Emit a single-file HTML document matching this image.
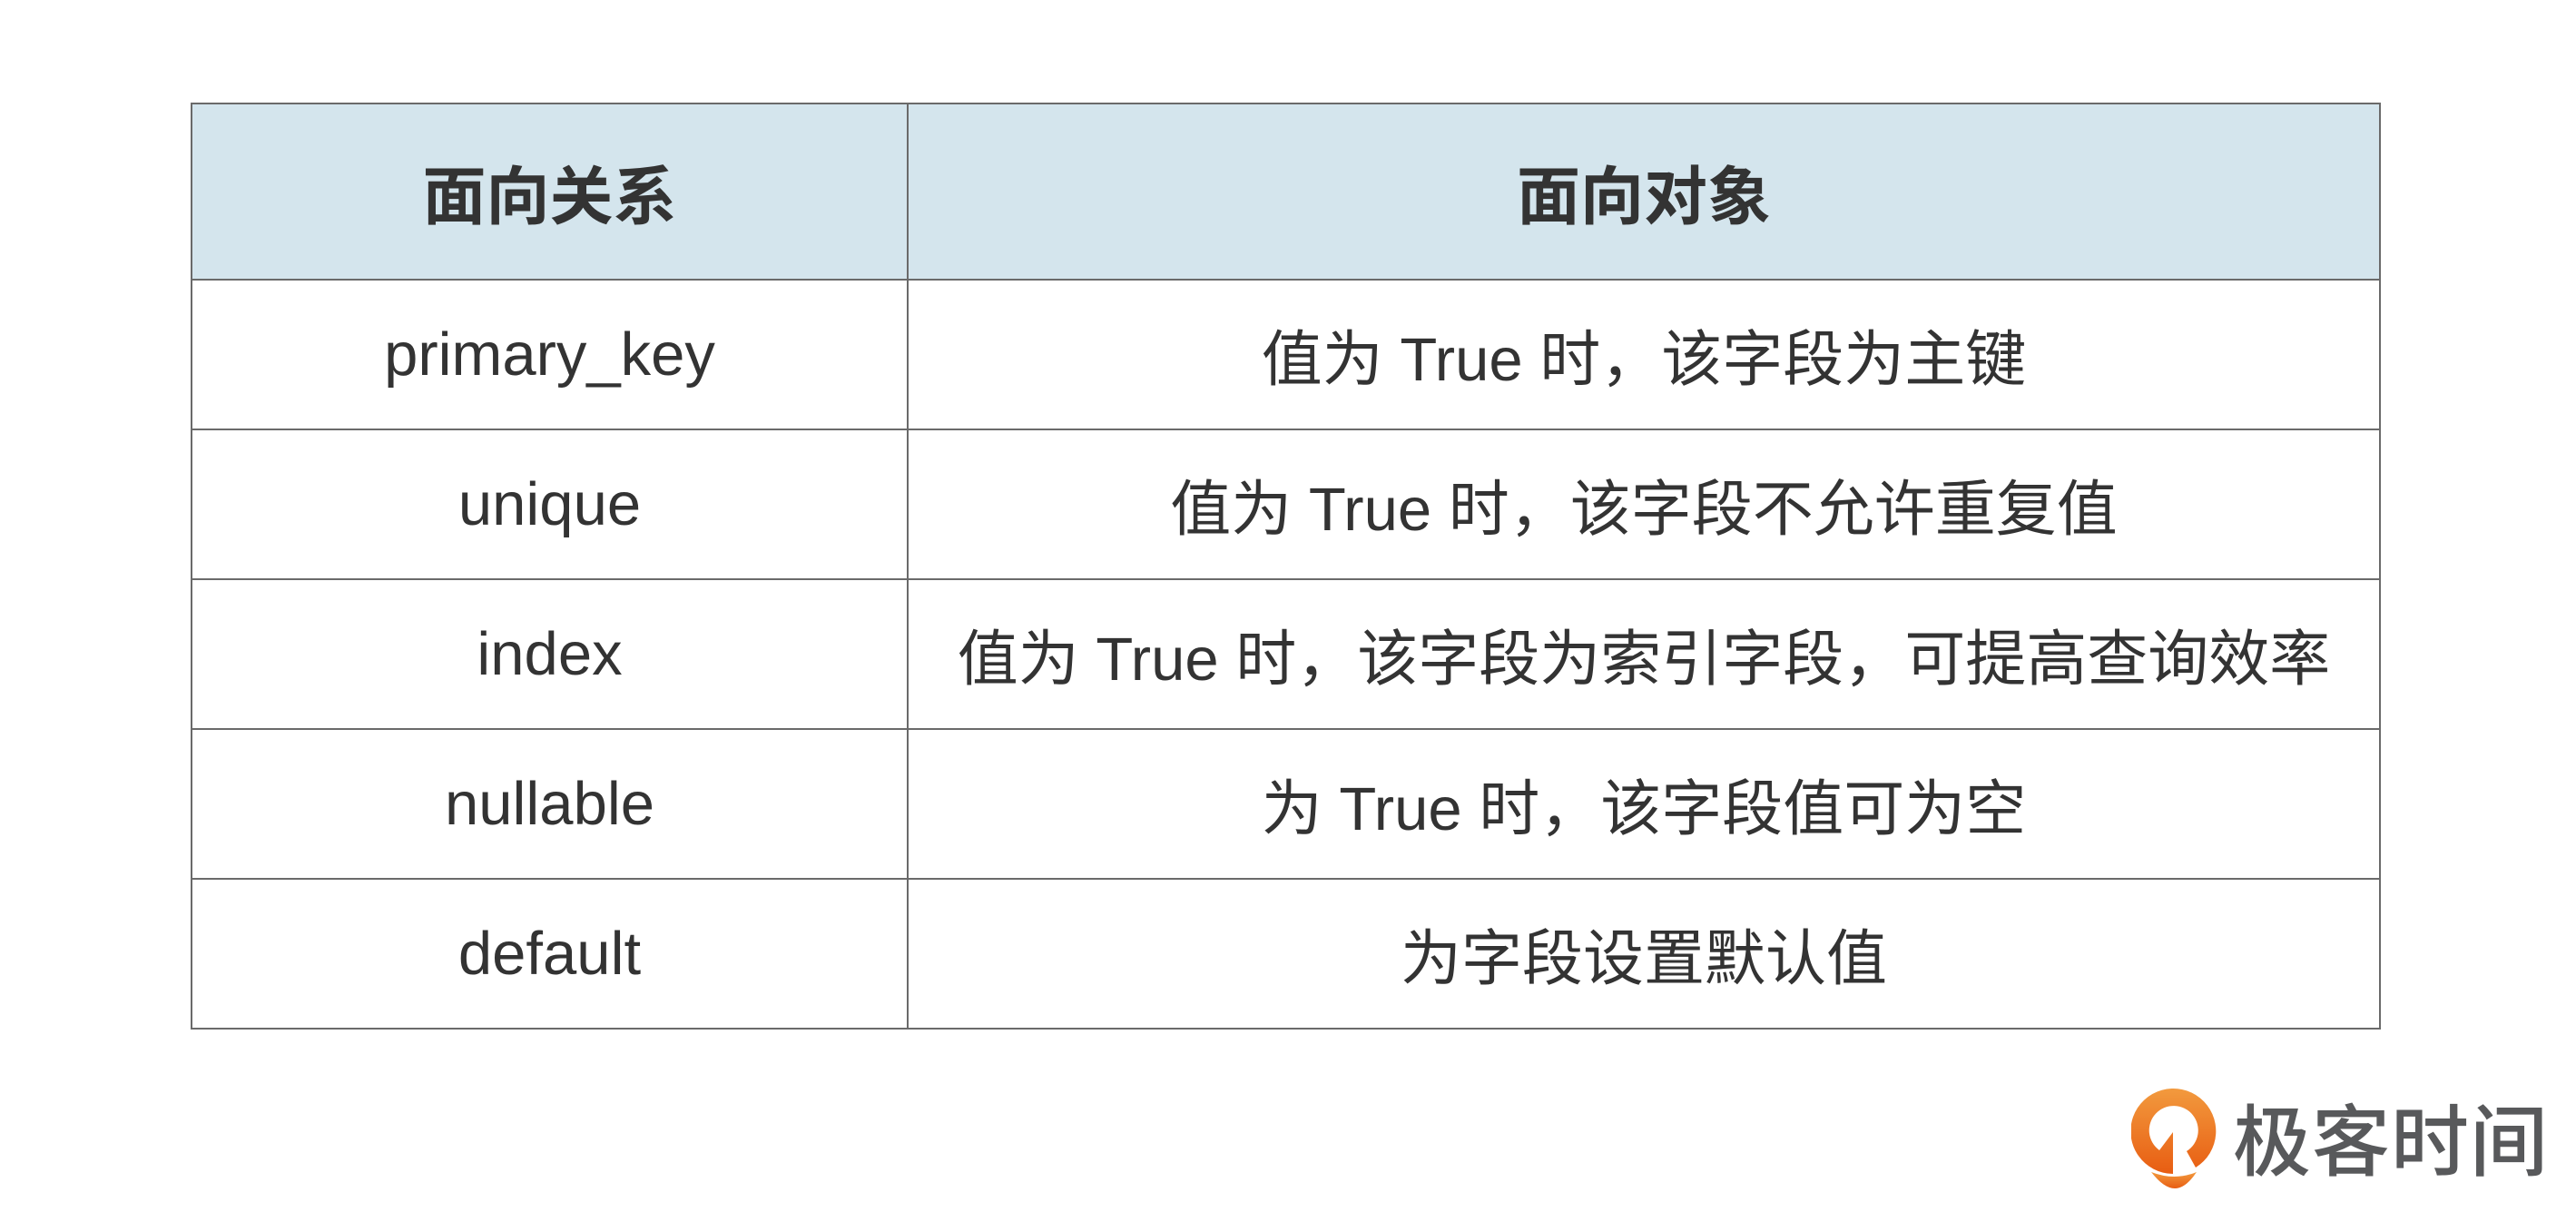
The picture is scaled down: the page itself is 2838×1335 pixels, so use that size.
<!DOCTYPE html>
<html><head><meta charset="utf-8"><style>
html,body{margin:0;padding:0;background:#fff;width:2838px;height:1335px;overflow:hidden}
table{position:absolute;left:210px;top:113px;border-collapse:collapse;font-family:"Liberation Sans","Noto Sans CJK SC",sans-serif;color:#333}
td,th{border:2px solid #6a6a6a;text-align:center;padding:0}
th{background:#d4e5ed;height:192px;font-size:70px;font-weight:bold;font-family:"Noto Sans CJK SC",sans-serif}
td{height:163px;font-size:67px}
.logo{position:absolute;left:2348px;top:1198px}
.lt{position:absolute;left:2460px;top:1196px;font-family:"Noto Sans CJK SC",sans-serif;font-size:86px;font-weight:500;color:#58595b;letter-spacing:1px;line-height:110px}
</style></head><body>
<table>
<tr><th style="width:787px">面向关系</th><th style="width:1620px">面向对象</th></tr>
<tr><td>primary_key</td><td>值为 True 时，该字段为主键</td></tr>
<tr><td>unique</td><td>值为 True 时，该字段不允许重复值</td></tr>
<tr><td>index</td><td>值为 True 时，该字段为索引字段，可提高查询效率</td></tr>
<tr><td>nullable</td><td>为 True 时，该字段值可为空</td></tr>
<tr><td>default</td><td>为字段设置默认值</td></tr>
</table>
<svg class="logo" width="100" height="115" viewBox="0 0 100 115">
<defs><linearGradient id="g" x1="0" y1="0" x2="0" y2="1"><stop offset="0" stop-color="#f29a3e"/><stop offset="1" stop-color="#e85d12"/></linearGradient></defs>
<path fill="url(#g)" d="M46 95A47 47 0 1 1 71 88L61 70A27 27 0 1 0 31 69L46 49Z"/>
<path fill="url(#g)" d="M22 93Q48 103 72 93Q60 111 48 111Q36 111 22 93Z"/>
</svg>
<div class="lt">极客时间</div>
</body></html>
